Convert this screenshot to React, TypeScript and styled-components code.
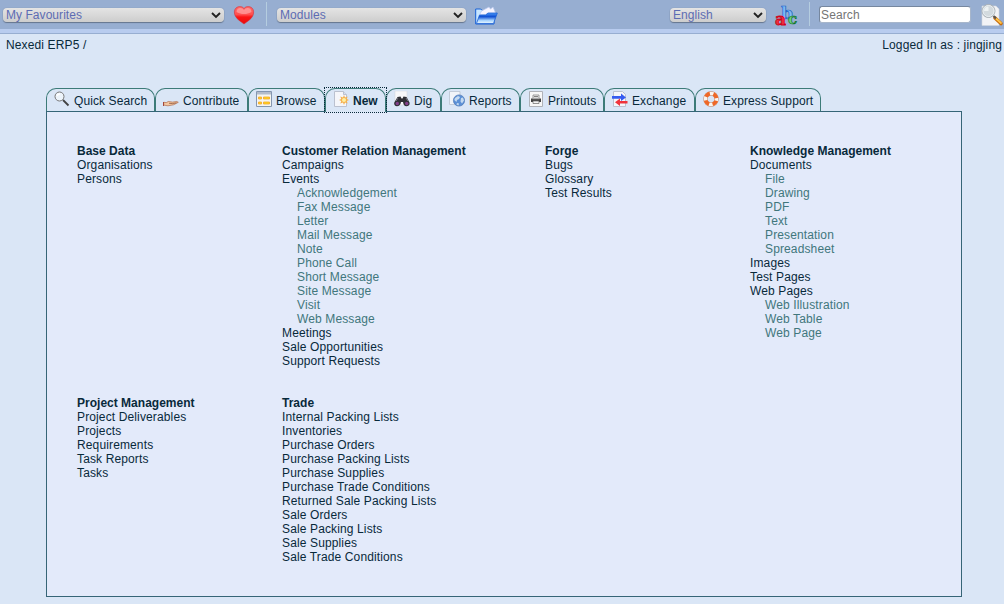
import React from 'react';
import styled, { createGlobalStyle } from 'styled-components';

const GlobalStyle = createGlobalStyle`
  * { box-sizing: border-box; }
  body {
    margin: 0;
    background: #dae6f6;
    color: #08293a;
    font: 12px/14px "Liberation Sans", Arial, sans-serif;
    letter-spacing: 0.13px;
    overflow: hidden;
  }
`;

const Page = styled.div`
  height: 604px;
  width: 1004px;
`;

const TopBar = styled.header`
  height: 34px;
  display: flex;
  align-items: flex-start;
  background: #97aed1;
  border-bottom: 1px solid #97aed1;
  box-shadow: inset 0 -4px 0 #b8ccef;
  padding-left: 3px;
`;

const SelectBox = styled.div<{ $width: number }>`
  width: ${(p) => p.$width}px;
  height: 14px;
  margin-top: 8px;
  padding: 0 3px;
  display: flex;
  align-items: center;
  justify-content: space-between;
  border-radius: 4px;
  background: linear-gradient(#e4e4e4, #cdcdcd);
  box-shadow: 0 1px 1px #65758d, 0 0 1px #75859d;
  color: #5d6cb3;
  line-height: 14px;
  letter-spacing: 0.05px;
`;

const IconSlot = styled.div<{ $width: number; $left: number; $top: number }>`
  width: ${(p) => p.$width}px;
  flex: none;
  margin: ${(p) => p.$top}px 0 0 ${(p) => p.$left}px;
  svg { display: block; overflow: visible; }
`;

const Divider = styled.div<{ $left: number; $right: number }>`
  width: 1px;
  height: 24px;
  margin: 2px ${(p) => p.$right}px 0 ${(p) => p.$left}px;
  background: #b5cde0;
`;

const Spacer = styled.div`
  flex: 1;
`;

const SearchInput = styled.input`
  width: 152px;
  height: 17px;
  margin: 6px 0 0;
  padding: 0 1px;
  border: 1px solid #76879f;
  border-right-color: #a7b6cb;
  border-bottom-color: #a7b6cb;
  border-radius: 3px;
  background: #fff;
  font: inherit;
  letter-spacing: 0.13px;
  &::placeholder { color: #757575; opacity: 1; }
`;

const Crumbs = styled.div`
  height: 54px;
  display: flex;
  justify-content: space-between;
  padding: 4px 2px 0 6px;
`;

const Tabs = styled.nav`
  display: flex;
  align-items: flex-start;
  height: 23px;
  margin-left: 46px;
`;

const Tab = styled.div<{ $width: number; $active?: boolean }>`
  width: ${(p) => p.$width}px;
  height: ${(p) => (p.$active ? 24 : 23)}px;
  display: flex;
  gap: 4px;
  padding: 2px 0 0 7px;
  border: 1px solid #3c7b78;
  border-bottom: 0;
  border-radius: 10px 10px 0 0;
  background: #dae6f6;
  font-weight: ${(p) => (p.$active ? 'bold' : 'normal')};
  letter-spacing: ${(p) => (p.$active ? 0 : 0.1)}px;
  white-space: nowrap;
  position: relative;
  z-index: ${(p) => (p.$active ? 1 : 0)};
  svg { flex: none; }
`;

const FocusFrame = styled.span`
  position: absolute;
  inset: -2px -2px -1px;
  border: 1px dotted #08293a;
`;

const TabLabel = styled.span`
  margin-top: 3px;
`;

const Panel = styled.main`
  width: 916px;
  height: 486px;
  margin-left: 46px;
  padding: 32px 0 0 30px;
  border: 1px solid #366577;
  background: #e3eafa;
  display: grid;
  grid-template-columns: 205px 263px 205px 1fr;
  grid-template-rows: 252px 1fr;
`;

const Group = styled.section``;

const GroupTitle = styled.h2`
  margin: 0;
  font: bold 12px/14px "Liberation Sans", Arial, sans-serif;
  letter-spacing: 0.01px;
`;

const Entry = styled.div<{ $sub?: boolean }>`
  padding-left: ${(p) => (p.$sub ? 15 : 0)}px;
  color: ${(p) => (p.$sub ? '#41777c' : '#08293a')};
`;

const Arrow = () => (
  <svg width="10" height="7" viewBox="0 0 10 7">
    <path d="M1 1l4 4 4-4" fill="none" stroke="#222" strokeWidth="1.9" />
  </svg>
);

const Heart = () => (
  <svg width="20" height="19" viewBox="0 0 20 19">
    <defs>
      <linearGradient id="heart" x1="0" y1="0" x2="0" y2="1">
        <stop offset="0" stopColor="#ff6a6a" />
        <stop offset=".45" stopColor="#ff5050" />
        <stop offset=".6" stopColor="#fb1414" />
        <stop offset="1" stopColor="#e80c0c" />
      </linearGradient>
    </defs>
    <path d="M10 2.500C8.500.3 4.500-.1 2 2-.2 4 .1 7.500 1.300 10 3 13.500 7 15.500 10 18c3-2.500 7-4.500 8.700-8 1.200-2.500 1.500-6-.7-8-2.500-2.100-6.500-1.700-8 .5z" fill="url(#heart)" stroke="#d0303c" strokeWidth=".6" />
    <path d="M2.500 6c0-2.500 1.800-4 3.800-4 1.900 0 2.900.8 3.700 2 .8-1.200 1.800-2 3.700-2 2 0 3.800 1.500 3.800 4-3 1.500-4.500 2-7.500 2s-4.500-.5-7.500-2z" fill="#ffc5c5" opacity=".5" />
  </svg>
);

const Folder = () => (
  <svg width="23" height="19" viewBox="0 0 23 19">
    <defs>
      <linearGradient id="folder" x1="0" y1="0" x2="0" y2="1">
        <stop offset="0" stopColor="#4c98f6" />
        <stop offset=".35" stopColor="#0f4fd4" />
        <stop offset=".7" stopColor="#a5d2fd" />
        <stop offset="1" stopColor="#eefaff" />
      </linearGradient>
    </defs>
    <path d="M.7 3h5l1.500 1.500H19V18H.7z" fill="#c8e6ff" stroke="#1761d5" />
    <path d="M4.500 9l2-4 7.500-4 1.500 2L18 1l3 7z" fill="#f6f4ff" stroke="#b9c8ee" strokeWidth=".7" />
    <path d="M4.500 9h6L13 7h9.300L18.500 17.500H1.500z" fill="url(#folder)" stroke="#1a5fd6" strokeWidth=".8" />
  </svg>
);

const Letters = () => (
  <svg width="24" height="23" viewBox="0 0 24 23" fontFamily="DejaVu Serif, serif" fontWeight="bold" letterSpacing="0">
    <text x="6" y="14.500" fontSize="17" fill="#7dbcf8" stroke="#1c62c4" strokeWidth=".7">b</text>
    <text x="0" y="21" fontSize="17" fill="#f0303c" stroke="#d0001b" strokeWidth=".8">a</text>
    <text x="13" y="20" fontSize="15" fill="#6fd676" stroke="#10712f" strokeWidth=".7">c</text>
  </svg>
);

const SearchPage = () => (
  <svg width="23" height="22" viewBox="0 0 23 22">
    <path d="M1 2h14l3 3v16.500H1z" fill="#f2f3f6" stroke="#d0d6df" strokeWidth=".6" />
    <path d="M14 14l6 5.500" stroke="#c86d0c" strokeWidth="3.600" strokeLinecap="round" />
    <path d="M15 14.500l5 4.500" stroke="#ffc348" strokeWidth="1.800" strokeLinecap="round" />
    <path d="M12.500 12l2.500 2.500" stroke="#555" strokeWidth="2" />
    <circle cx="7.500" cy="7" r="6.500" fill="#d3dade" stroke="#a9b0b5" strokeWidth="1" />
    <path d="M3 7a4.500 4.500 0 014.500-4.500V7z" fill="#eef2f3" />
    <circle cx="7.500" cy="7" r="5.500" fill="none" stroke="#e9eef1" />
  </svg>
);

const Magnifier = () => (
  <svg width="16" height="16" viewBox="0 0 16 16">
    <path d="M9 9l5.500 5.500" stroke="#424242" strokeWidth="1.800" />
    <circle cx="5.500" cy="5.500" r="4.500" fill="#edf4fb" stroke="#777" />
    <path d="M3 5a3 3 0 013-2" fill="none" stroke="#fff" strokeWidth="1.500" />
  </svg>
);

const Hand = () => (
  <svg width="16" height="16" viewBox="0 0 16 16">
    <path d="M.7 11.300l2.600.3 2-1.100 4.200.6 4.300-.6 1.500.8-4.800 2.500-5.500 1-4.300-.7z" fill="#f3c6a0" stroke="#a85a35" strokeWidth=".6" />
    <path d="M6 12.300l3.500.3 4-.8" fill="none" stroke="#743c27" strokeWidth=".6" />
    <path d="M0 11h1v4H0z" fill="#a3463b" />
  </svg>
);

const Table = () => (
  <svg width="16" height="16" viewBox="0 0 16 16">
    <path d="M.5.500h15v15H.5z" fill="#f5f5ef" stroke="#8496b0" />
    <path d="M1 1h14v2.500H1z" fill="#b3bccb" />
    <path d="M2.500 6h3v2h-3zm5 0H13.500v2H7.500zM2.500 11h3v2h-3zm5 0H13.500v2H7.500z" fill="#ffd91c" stroke="#f5a32c" strokeWidth=".8" />
  </svg>
);

const Sheet = () => (
  <path d="M1.500.5h9l3 3v12h-12z" fill="#f5f6fa" stroke="#bbc1cf" />
);

const NewDoc = () => (
  <svg width="16" height="16" viewBox="0 0 16 16">
    <Sheet />
    <path d="M10.500.5v3h3" fill="#d9e0ef" stroke="#bbc1cf" />
    <path d="M11 4l1 2.500 2.700-1-1 2.600L16 9l-2.300 1 1 2.600-2.700-1-1 2.500-1-2.500-2.700 1 1-2.600L6 9l2.300-.9-1-2.600 2.700 1z" fill="#f5b04c" />
    <circle cx="11" cy="9" r="2" fill="#fff0a0" />
  </svg>
);

const Binoculars = () => (
  <svg width="16" height="16" viewBox="0 0 16 16">
    <path d="M1 0h12v14H1z" fill="#f8f8fa" stroke="#d6d9df" strokeWidth=".6" />
    <path d="M3.500 6l3-.5 1 2h1l1-2 3 .5 3 5.500c.5 2.500-1 3.700-3 3.700S9.500 14 9 11H7c-.5 3-2 4.200-4 4.200S-.3 13.500.3 11.500z" fill="#303036" />
    <ellipse cx="3.300" cy="12.500" rx="1.700" ry="1.700" fill="#84408b" />
    <ellipse cx="12.700" cy="12.500" rx="1.700" ry="1.700" fill="#84408b" />
    <path d="M4 7L2 10M12 7l2 3" stroke="#777782" />
  </svg>
);

const Globe = () => (
  <svg width="16" height="16" viewBox="0 0 16 16">
    <path d="M.5.5h10.500v13H.5z" fill="#f1f4f9" stroke="#bac3d1" strokeWidth=".8" />
    <circle cx="10" cy="9.500" r="5.600" fill="#5c90d6" stroke="#4f78b6" strokeWidth=".7" />
    <path d="M6 7l3-2 2 1-1 2-2 1-.5 2L5.300 9zM12 7l2-.5 1 3-2 3-1.500-2zM8 12l2 .5-.5 2-2-1z" fill="#c5daf0" />
  </svg>
);

const Printer = () => (
  <svg width="16" height="16" viewBox="0 0 16 16">
    <path d="M1.500.5h13v15h-13z" fill="#f7f7f7" stroke="#afb2b8" />
    <path d="M5 4h6v4H5z" fill="#eee" stroke="#777" strokeWidth=".7" />
    <path d="M3 7.500h10v3.500H3z" fill="#444" />
    <path d="M4.500 6.700h7v1.500h-7z" fill="#aaa" />
    <path d="M5 10h6v2.500H5z" fill="#f3f3f3" stroke="#666" strokeWidth=".7" />
    <path d="M6 5.500h4" stroke="#666" strokeWidth=".8" />
  </svg>
);

const Exchange = () => (
  <svg width="16" height="16" viewBox="0 0 16 16">
    <Sheet />
    <path d="M0 5h9V2.500L14 6.500 9 10V7.700H0z" fill="#365cf0" />
    <path d="M15.500 10H8V7.500L3 11.300 8 15v-2.500h7.500z" fill="#f0343c" />
  </svg>
);

const LifeRing = () => (
  <svg width="16" height="16" viewBox="0 0 16 16">
    <circle cx="8" cy="8" r="5.500" fill="none" stroke="#b98468" strokeWidth="4.400" />
    <circle cx="8" cy="8" r="5.500" fill="none" stroke="#faf5ee" strokeWidth="3.500" />
    <circle cx="8" cy="8" r="5.500" fill="none" stroke="#ee6827" strokeWidth="3.800" strokeDasharray="5 3.640" strokeDashoffset="-1.800" />
  </svg>
);

const tabs = [
  { label: 'Quick Search', width: 109, Icon: Magnifier },
  { label: 'Contribute', width: 93, Icon: Hand },
  { label: 'Browse', width: 77, Icon: Table },
  { label: 'New', width: 61, Icon: NewDoc, active: true },
  { label: 'Dig', width: 55, Icon: Binoculars },
  { label: 'Reports', width: 79, Icon: Globe },
  { label: 'Printouts', width: 84, Icon: Printer },
  { label: 'Exchange', width: 91, Icon: Exchange },
  { label: 'Express Support', width: 126, Icon: LifeRing },
];

/* Entries that start with ">" are nested below the preceding module. */
const groups: { title: string; entries: string[] }[] = [
  { title: 'Base Data', entries: ['Organisations', 'Persons'] },
  {
    title: 'Customer Relation Management',
    entries: ['Campaigns', 'Events', '>Acknowledgement', '>Fax Message', '>Letter', '>Mail Message', '>Note', '>Phone Call', '>Short Message', '>Site Message', '>Visit', '>Web Message', 'Meetings', 'Sale Opportunities', 'Support Requests'],
  },
  { title: 'Forge', entries: ['Bugs', 'Glossary', 'Test Results'] },
  {
    title: 'Knowledge Management',
    entries: ['Documents', '>File', '>Drawing', '>PDF', '>Text', '>Presentation', '>Spreadsheet', 'Images', 'Test Pages', 'Web Pages', '>Web Illustration', '>Web Table', '>Web Page'],
  },
  { title: 'Project Management', entries: ['Project Deliverables', 'Projects', 'Requirements', 'Task Reports', 'Tasks'] },
  {
    title: 'Trade',
    entries: ['Internal Packing Lists', 'Inventories', 'Purchase Orders', 'Purchase Packing Lists', 'Purchase Supplies', 'Purchase Trade Conditions', 'Returned Sale Packing Lists', 'Sale Orders', 'Sale Packing Lists', 'Sale Supplies', 'Sale Trade Conditions'],
  },
];

export default function App() {
  return (
    <Page>
      <GlobalStyle />
      <TopBar>
        <SelectBox $width={221}>My Favourites<Arrow /></SelectBox>
        <IconSlot $width={20} $left={10} $top={6}><Heart /></IconSlot>
        <Divider $left={12} $right={10} />
        <SelectBox $width={189}>Modules<Arrow /></SelectBox>
        <IconSlot $width={23} $left={9} $top={6}><Folder /></IconSlot>
        <Spacer />
        <SelectBox $width={96}>English<Arrow /></SelectBox>
        <IconSlot $width={24} $left={9} $top={4}><Letters /></IconSlot>
        <Divider $left={10} $right={9} />
        <SearchInput placeholder="Search" />
        <IconSlot $width={23} $left={10} $top={4}><SearchPage /></IconSlot>
      </TopBar>
      <Crumbs>
        <span>Nexedi ERP5 /</span>
        <span>Logged In as : jingjing</span>
      </Crumbs>
      <Tabs>
        {tabs.map(({ label, width, Icon, active }) => (
          <Tab key={label} $width={width} $active={active}>
            <Icon />
            <TabLabel>{label}</TabLabel>
            {active && <FocusFrame />}
          </Tab>
        ))}
      </Tabs>
      <Panel>
        {groups.map((group) => (
          <Group key={group.title}>
            <GroupTitle>{group.title}</GroupTitle>
            {group.entries.map((entry) => (
              <Entry key={entry} $sub={entry.startsWith('>')}>{entry.replace('>', '')}</Entry>
            ))}
          </Group>
        ))}
      </Panel>
    </Page>
  );
}
